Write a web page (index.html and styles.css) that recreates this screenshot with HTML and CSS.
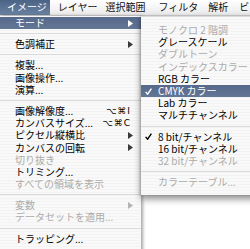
FILE: index.html
```html
<!DOCTYPE html>
<html lang="ja">
<head>
<meta charset="utf-8">
<link rel="stylesheet" href="styles.css">
</head>
<body>
<div class="screen">
  <div class="menubar">
    <span class="mb-item mb-first active">イメージ</span>
    <span class="mb-item mb-layer">レイヤー</span>
    <span class="mb-item mb-select">選択範囲</span>
    <span class="mb-item mb-filter">フィルタ</span>
    <span class="mb-item mb-analysis">解析</span>
    <span class="mb-item mb-view">ビ</span>
  </div>
  <div class="menus">
    <ul class="menu main">
      <li class="item hl"><span class="label">モード</span><svg class="arrow" viewBox="0 0 5 7"><polygon points="0,0 5,3.5 0,7"/></svg></li>
      <li class="sep"></li>
      <li class="item"><span class="label">色調補正</span><svg class="arrow" viewBox="0 0 5 7"><polygon points="0,0 5,3.5 0,7"/></svg></li>
      <li class="sep"></li>
      <li class="item"><span class="label">複製...</span></li>
      <li class="item"><span class="label">画像操作...</span></li>
      <li class="item"><span class="label">演算...</span></li>
      <li class="sep"></li>
      <li class="item"><span class="label">画像解像度...</span><span class="key">⌥⌘I</span></li>
      <li class="item"><span class="label">カンバスサイズ...</span><span class="key">⌥⌘C</span></li>
      <li class="item"><span class="label">ピクセル縦横比</span><svg class="arrow" viewBox="0 0 5 7"><polygon points="0,0 5,3.5 0,7"/></svg></li>
      <li class="item"><span class="label">カンバスの回転</span><svg class="arrow" viewBox="0 0 5 7"><polygon points="0,0 5,3.5 0,7"/></svg></li>
      <li class="item dis"><span class="label">切り抜き</span></li>
      <li class="item"><span class="label">トリミング...</span></li>
      <li class="item dis"><span class="label">すべての領域を表示</span></li>
      <li class="sep"></li>
      <li class="item dis"><span class="label">変数</span><svg class="arrow" viewBox="0 0 5 7"><polygon points="0,0 5,3.5 0,7"/></svg></li>
      <li class="item dis"><span class="label">データセットを適用...</span></li>
      <li class="sep"></li>
      <li class="item"><span class="label">トラッピング...</span></li>
    </ul>
    <ul class="menu sub">
      <li class="item dis"><span class="check"></span><span class="label">モノクロ 2 階調</span></li>
      <li class="item"><span class="check"></span><span class="label">グレースケール</span></li>
      <li class="item dis"><span class="check"></span><span class="label">ダブルトーン</span></li>
      <li class="item dis"><span class="check"></span><span class="label">インデックスカラー</span></li>
      <li class="item"><span class="check"></span><span class="label">RGB カラー</span></li>
      <li class="item hl"><span class="check"><svg viewBox="0 0 7 7"><path d="M0.6 3.9 L2.6 6.2 L6.4 0.6"/></svg></span><span class="label">CMYK カラー</span></li>
      <li class="item"><span class="check"></span><span class="label">Lab カラー</span></li>
      <li class="item"><span class="check"></span><span class="label">マルチチャンネル</span></li>
      <li class="sep"></li>
      <li class="item"><span class="check"><svg viewBox="0 0 7 7"><path d="M0.6 3.9 L2.6 6.2 L6.4 0.6"/></svg></span><span class="label">8 bit/チャンネル</span></li>
      <li class="item"><span class="check"></span><span class="label">16 bit/チャンネル</span></li>
      <li class="item dis"><span class="check"></span><span class="label">32 bit/チャンネル</span></li>
      <li class="sep"></li>
      <li class="item dis"><span class="check"></span><span class="label">カラーテーブル...</span></li>
    </ul>
  </div>
</div>
</body>
</html>
```

FILE: styles.css
```css
* { box-sizing: border-box; }
html, body { margin: 0; padding: 0; background: #fff; }

.screen {
  width: 250px;
  height: 249px;
  overflow: hidden;
  background: #fff;
  font-family: "Noto Sans CJK JP", "DejaVu Sans", sans-serif;
  font-size: 10px;
  color: #111;
}

/* menu bar */
.menubar {
  display: flex;
  height: 16px;
  background: linear-gradient(#ffffff, #f4f4f4 55%, #e9e9e9);
  border-bottom: 1px solid #d6d6d6;
}
.mb-item {
  line-height: 14px;
  white-space: nowrap;
}
.mb-first { padding: 0 3px 0 7px; }
.mb-layer { margin-left: 8px; }
.mb-select { margin-left: 8px; }
.mb-filter { margin-left: 13px; }
.mb-analysis { margin-left: 10px; }
.mb-view { margin-left: 11px; }
.mb-item.active {
  background: linear-gradient(#4b6485, #5d7596 60%, #6b82a1);
  color: #fff;
}

/* menus */
.menus {
  display: flex;
  align-items: flex-start;
}
.menu {
  list-style: none;
  margin: 0;
  background: repeating-linear-gradient(#f9f9f9 0 2px, #f3f3f3 2px 3px);
}
.main {
  width: 141px;
  flex: none;
  padding: 1px 0 20px;
  position: relative;
  z-index: 1;
  box-shadow: 2px 0 3px rgba(0, 0, 0, 0.35);
}
.sub {
  width: 150px;
  flex: none;
  padding: 7px 0 7px;
  position: relative;
  z-index: 2;
  border-top: 1px solid #dcdcdc;
  box-shadow: 0 4px 7px rgba(0, 0, 0, 0.45), -1px 0 2px rgba(0, 0, 0, 0.2);
}

.item {
  display: flex;
  align-items: center;
  height: 12.2px;
  line-height: 12.2px;
  white-space: nowrap;
  color: #000;
}
.main .item { padding: 0 8px 0 15px; }
.sub .item { padding: 0 0 0 4px; }

.label { flex: 1; }
.item.dis { color: #ababab; }
.item.hl {
  background: linear-gradient(#56698a, #627696);
  color: #fff;
}

.arrow {
  width: 5px;
  height: 7px;
  fill: #3a3a3a;
  flex: none;
}
.item.dis .arrow { fill: #b4b4b4; }
.item.hl .arrow { fill: #fff; }

.key {
  font-family: "DejaVu Sans", sans-serif;
  font-size: 9px;
  letter-spacing: 1px;
  margin-right: 2px;
  color: #000;
}

.check {
  width: 13px;
  flex: none;
  display: flex;
  align-items: center;
}
.check svg {
  width: 7px;
  height: 7px;
  fill: none;
  stroke: #000;
  stroke-width: 1.4;
}
.item.hl .check svg { stroke: #fff; }

.sep {
  height: 9px;
  position: relative;
}
.sep::after {
  content: "";
  position: absolute;
  left: 0;
  right: 0;
  top: 4px;
  height: 1px;
  background: #dadada;
}
```
